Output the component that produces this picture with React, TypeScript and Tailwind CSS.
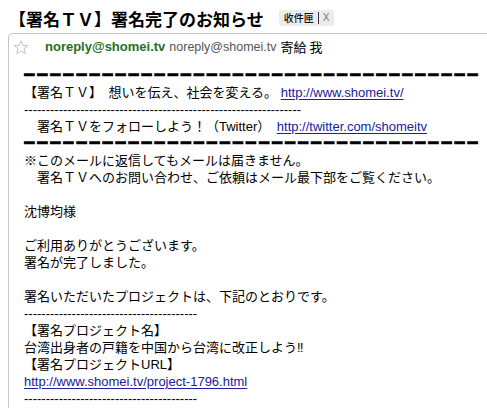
const HEAVY = "━".repeat(35);

function Heavy() {
  return (
    <div className="h-[17px] leading-[17px] whitespace-nowrap font-['DejaVu_Sans',sans-serif] text-[17.5px] tracking-[2.5px] text-black">
      {HEAVY}
    </div>
  );
}

function Thin({ n }: { n: number }) {
  return <div className="h-[17px] leading-[17px] whitespace-nowrap text-[13px]">{"-".repeat(n)}</div>;
}

function Line({ children }: { children?: React.ReactNode }) {
  return <div className="h-[17px] leading-[17px] whitespace-nowrap">{children ?? "\u00a0"}</div>;
}

function Link({ children }: { children: React.ReactNode }) {
  return <a className="text-[#20209a] underline text-[13px] underline-offset-[2px]">{children}</a>;
}

function Star() {
  return (
    <svg width="16" height="15" viewBox="0 0 16 15">
      <path d="M8 0.8 L9.9 5.4 L14.9 5.6 L11 8.7 L12.3 13.6 L8 10.9 L3.7 13.6 L5 8.7 L1.1 5.6 L6.1 5.4 Z" fill="#fff" stroke="#c4c4c4" strokeWidth="1" strokeLinejoin="round" />
    </svg>
  );
}

export default function App() {
  return (
    <div className="w-[487px] h-[408px] bg-white overflow-hidden text-black font-['Liberation_Sans','Noto_Sans_CJK_JP',sans-serif]">
      <div className="h-[33px] pt-[3px] pl-[9px] flex items-center">
        <h1 className="text-[17px] font-bold font-['Noto_Sans_CJK_JP',sans-serif] leading-none">【署名ＴＶ】署名完了のお知らせ</h1>
        <span className="ml-[15px] h-[16px] px-[5px] flex items-center gap-[4px] bg-[#ececec] rounded-[2px] text-[10px] leading-none">
          <span className="text-[#111] font-medium font-['Noto_Sans_CJK_TC',sans-serif]">收件匣</span>
          <span className="w-px h-[12px] bg-[#333]" />
          <span className="text-[#777] font-['Liberation_Sans',sans-serif]">X</span>
        </span>
      </div>
      <div className="ml-[8px] border-l border-t border-[#c6c6c6] rounded-tl-[5px] h-[400px]">
        <div className="h-[26px] flex items-center pl-[4px]">
          <Star />
          <span className="ml-[16px] text-[13px] font-bold text-[#1f6f27]">noreply@shomei.tv</span>
          <span className="ml-[4px] text-[12.5px] text-[#555]">noreply@shomei.tv</span>
          <span className="ml-[4px] text-[13px] font-['Noto_Sans_CJK_TC',sans-serif]">寄給 我</span>
        </div>
        <div className="pt-[7px] pl-[15px] text-[13px]">
          <Heavy />
          <Line>【署名ＴＶ】　想いを伝え、社会を変える。 <Link>http://www.shomei.tv/</Link></Line>
          <Thin n={64} />
          <Line>　署名ＴＶをフォローしよう！（Twitter）　<Link>http://twitter.com/shomeitv</Link></Line>
          <Heavy />
          <Line>※このメールに返信してもメールは届きません。</Line>
          <Line>　署名ＴＶへのお問い合わせ、ご依頼はメール最下部をご覧ください。</Line>
          <Line />
          <Line>沈博均様</Line>
          <Line />
          <Line>ご利用ありがとうございます。</Line>
          <Line>署名が完了しました。</Line>
          <Line />
          <Line>署名いただいたプロジェクトは、下記のとおりです。</Line>
          <Thin n={40} />
          <Line>【署名プロジェクト名】</Line>
          <Line>台湾出身者の戸籍を中国から台湾に改正しよう‼</Line>
          <Line>【署名プロジェクトURL】</Line>
          <Line><Link>http://www.shomei.tv/project-1796.html</Link></Line>
          <Thin n={40} />
        </div>
      </div>
    </div>
  );
}
